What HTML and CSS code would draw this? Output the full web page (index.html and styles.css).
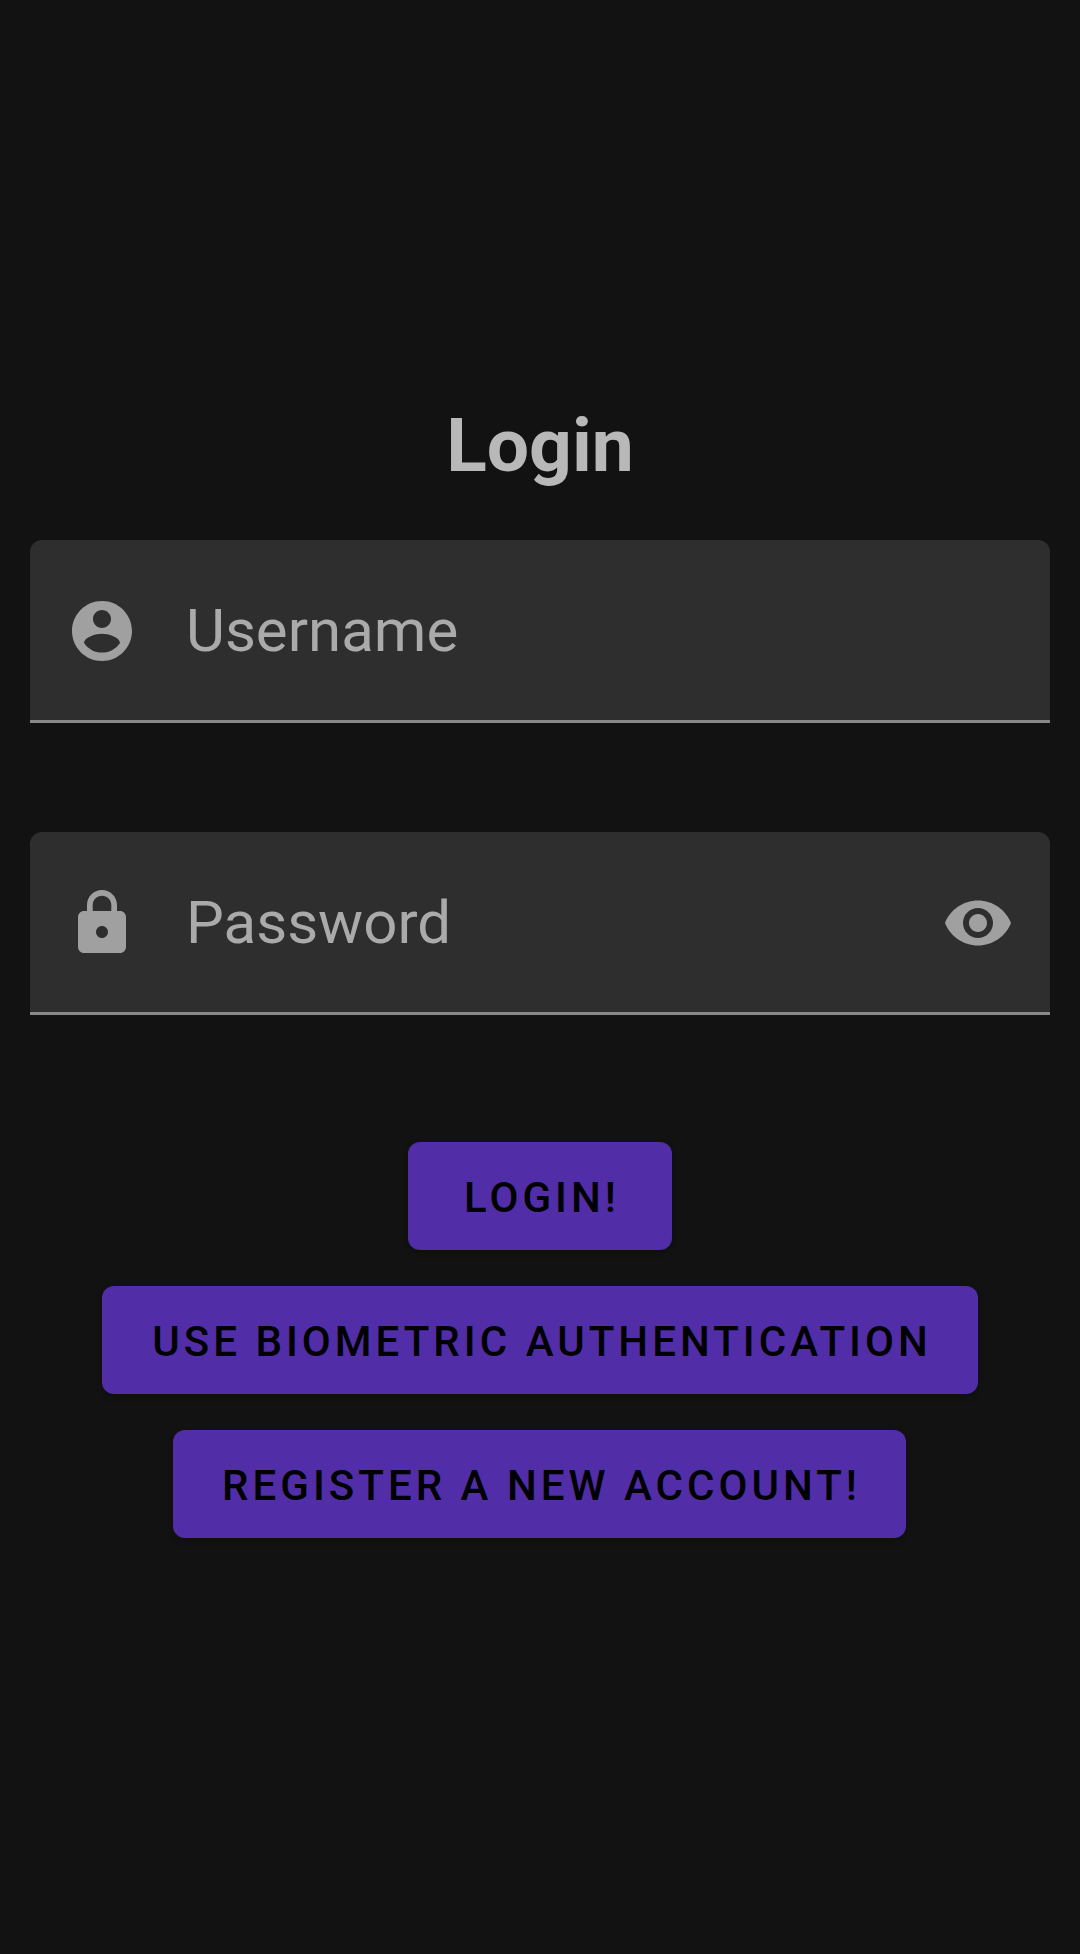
FILE: index.html
```html
<!DOCTYPE html>
<html lang="en">
<head>
<meta charset="utf-8">
<title>Login</title>
<link rel="stylesheet" href="styles.css">
</head>
<body>
<main class="screen">
  <h1 class="title">Login</h1>
  <div class="field">
    <svg class="icon" viewBox="0 0 24 24"><path d="M12 2C6.480 2 2 6.480 2 12s4.480 10 10 10 10-4.480 10-10S17.520 2 12 2zm0 3c1.660 0 3 1.340 3 3s-1.340 3-3 3-3-1.340-3-3 1.340-3 3-3zm0 14.200c-2.500 0-4.710-1.280-6-3.220.03-1.990 4-3.080 6-3.080 1.990 0 5.970 1.090 6 3.080-1.290 1.940-3.500 3.220-6 3.220z"/></svg>
    <span class="label">Username</span>
  </div>
  <div class="field">
    <svg class="icon" viewBox="0 0 24 24"><path d="M18 8h-1V6c0-2.760-2.240-5-5-5S7 3.240 7 6v2H6c-1.100 0-2 .9-2 2v10c0 1.100.9 2 2 2h12c1.100 0 2-.9 2-2V10c0-1.100-.9-2-2-2zm-6 9c-1.100 0-2-.9-2-2s.9-2 2-2 2 .9 2 2-.9 2-2 2zm3.100-9H8.900V6c0-1.710 1.390-3.100 3.100-3.100 1.710 0 3.100 1.390 3.100 3.100v2z"/></svg>
    <span class="label">Password</span>
    <svg class="icon" viewBox="0 0 24 24"><path d="M12 4.500C7 4.500 2.730 7.610 1 12c1.730 4.390 6 7.500 11 7.500s9.270-3.110 11-7.500c-1.730-4.390-6-7.500-11-7.500zM12 17c-2.760 0-5-2.240-5-5s2.240-5 5-5 5 2.240 5 5-2.240 5-5 5zm0-8c-1.660 0-3 1.340-3 3s1.340 3 3 3 3-1.340 3-3-1.340-3-3-3z"/></svg>
  </div>
  <div class="actions">
    <button class="button button-login">Login!</button>
    <button class="button button-biometric">Use biometric authentication</button>
    <button class="button button-register">Register a new account!</button>
  </div>
</main>
</body>
</html>
```
FILE: styles.css
```css
* { box-sizing: border-box; }
body { margin: 0; background: #121212; font-family: Roboto, sans-serif; }
.screen { height: 1954px; padding: 395px 30px 0; }
.title { height: 100px; margin: 0 0 45px; color: #b8b8b8; font-size: 75px; font-weight: 700; line-height: 100px; text-align: center; }
.field { display: flex; align-items: center; height: 183px; margin-bottom: 109px; padding: 0 36px; background: linear-gradient(#2e2e2e 180px, #888 180px); border-radius: 12px 12px 0 0; }
.icon { width: 72px; height: 72px; margin-bottom: 1px; fill: #a0a0a0; }
.label { flex: 1; margin: 0 0 3px 48px; color: #aaa; font-size: 60px; }
.actions { display: flex; flex-direction: column; align-items: center; gap: 36px; padding-top: 18px; }
.button { height: 108px; padding: 2px 0 0 4px; border: 0; border-radius: 12px; background: #512da8; color: #000; font: 500 42px Roboto, sans-serif; letter-spacing: 4.03px; text-transform: uppercase; white-space: nowrap; box-shadow: 0 3px 6px rgba(0,0,0,.2); }
.button-login { width: 264px; }
.button-biometric { width: 876px; }
.button-register { width: 733px; margin-right: 1px; }
```
